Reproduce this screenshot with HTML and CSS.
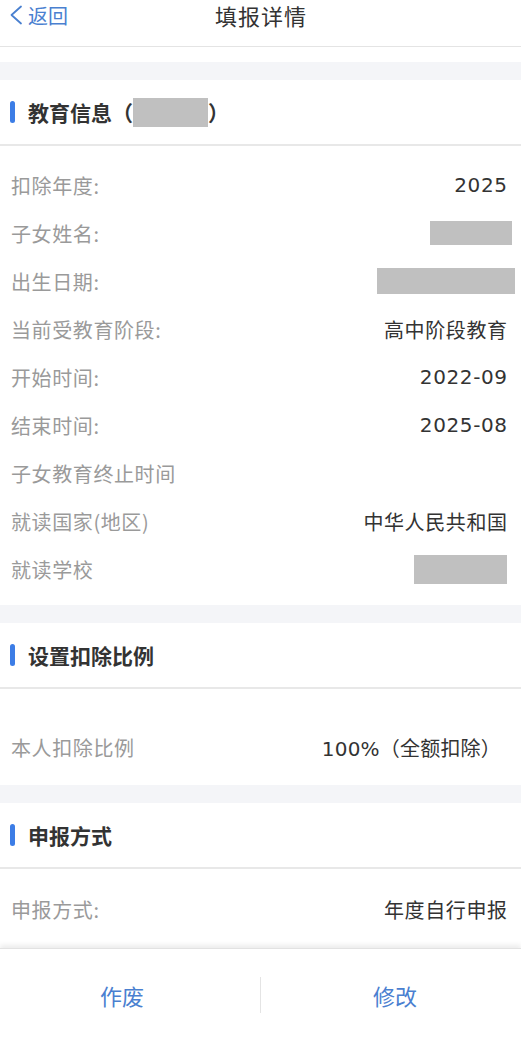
FILE: index.html
```html
<!DOCTYPE html>
<html lang="zh-CN">
<head>
<meta charset="utf-8">
<title>填报详情</title>
<link rel="stylesheet" href="styles.css">
</head>
<body>
<div class="page">
  <header class="topbar">
    <a class="back">
      <svg class="chev" width="16" height="20" viewBox="0 0 16 20"><path d="M13 1.5 L3.5 10 L13 18.5" fill="none" stroke="currentColor" stroke-width="1.8" stroke-linecap="round" stroke-linejoin="round"/></svg>
      <span>返回</span>
    </a>
    <h1 class="title">填报详情</h1>
  </header>
  <div class="spacer"></div>

  <section class="card">
    <div class="card-head"><span class="bar"></span><span class="head-text">教育信息（<span class="mask mask-title"></span>）</span></div>
    <div class="rows rows-edu">
      <div class="row"><span class="label">扣除年度:</span><span class="value">2025</span></div>
      <div class="row"><span class="label">子女姓名:</span><span class="mask mask-name"></span></div>
      <div class="row"><span class="label">出生日期:</span><span class="mask mask-birth"></span></div>
      <div class="row"><span class="label">当前受教育阶段:</span><span class="value">高中阶段教育</span></div>
      <div class="row"><span class="label">开始时间:</span><span class="value">2022-09</span></div>
      <div class="row"><span class="label">结束时间:</span><span class="value">2025-08</span></div>
      <div class="row"><span class="label">子女教育终止时间</span><span class="value"></span></div>
      <div class="row"><span class="label">就读国家(地区)</span><span class="value">中华人民共和国</span></div>
      <div class="row"><span class="label">就读学校</span><span class="mask mask-school"></span></div>
    </div>
  </section>

  <section class="card">
    <div class="card-head"><span class="bar"></span><span class="head-text">设置扣除比例</span></div>
    <div class="rows rows-ratio">
      <div class="row"><span class="label">本人扣除比例</span><span class="value value-ratio">100%（全额扣除）</span></div>
    </div>
  </section>

  <section class="card">
    <div class="card-head"><span class="bar"></span><span class="head-text">申报方式</span></div>
    <div class="rows rows-mode">
      <div class="row"><span class="label">申报方式:</span><span class="value">年度自行申报</span></div>
    </div>
  </section>

  <footer class="actions">
    <button class="btn btn-left">作废</button>
    <span class="divider"></span>
    <button class="btn btn-right">修改</button>
  </footer>
</div>
</body>
</html>
```
FILE: styles.css
```css
* { box-sizing: border-box; }
html, body { margin: 0; padding: 0; background: #fff; }
body {
  font-family: "Noto Sans CJK SC", "Noto Sans", sans-serif;
  color: #333;
}
.page { width: 521px; height: 1040px; overflow: hidden; display: flex; flex-direction: column; }

.topbar {
  height: 47px;
  border-bottom: 1px solid #e4e4e4;
  display: flex;
  justify-content: center;
  align-items: flex-start;
  position: relative;
}
.title {
  margin: 0;
  font-size: 22px;
  font-weight: 400;
  line-height: 30px;
  color: #333;
  letter-spacing: 1px;
  padding-left: 1px;
}
.back {
  position: absolute;
  left: 8px;
  top: 0;
  height: 30px;
  display: flex;
  align-items: center;
  gap: 4px;
  color: #4a80d0;
  font-size: 20px;
}
.chev { display: block; }
.spacer { height: 15px; }

.card { border-top: 18px solid #f4f5f8; }
.card-head {
  height: 66px;
  border-bottom: 2px solid #e8e8e8;
  display: flex;
  align-items: center;
  padding-left: 10px;
  gap: 13px;
}
.bar { width: 5px; height: 22px; border-radius: 3px; background: #3c7de6; }
.head-text {
  font-size: 21px;
  font-weight: 700;
  color: #333;
  display: flex;
  align-items: center;
}
.mask { display: inline-block; background: #c0c0c0; }
.mask-title { width: 75px; height: 29px; }
.mask-name { width: 82px; height: 24px; margin-right: -5px; }
.mask-birth { width: 138px; height: 26px; margin-right: -8px; }
.mask-school { width: 93px; height: 29px; }

.rows { display: flex; flex-direction: column; padding: 0 14px 0 11px; }
.rows-edu { padding-top: 15px; padding-bottom: 12px; }
.rows-ratio { padding-top: 34px; padding-bottom: 14px; }
.rows-mode { padding-top: 16px; padding-bottom: 15px; }
.row {
  height: 48px;
  display: flex;
  justify-content: space-between;
  align-items: center;
  font-size: 20px;
  letter-spacing: 0.6px;
}
.label { color: #9a9a9a; }
.value {
  color: #333;
  font-family: "DejaVu Sans", "Noto Sans CJK SC", sans-serif;
  margin-right: -0.6px;
}
.value-ratio { margin-right: 6px; letter-spacing: 0.2px; }

.actions {
  flex: 1;
  display: flex;
  align-items: center;
  box-shadow: 0 -3px 5px rgba(0,0,0,0.08);
  border-top: 1px solid #e2e2e2;
  position: relative;
}
.btn {
  flex: 1;
  border: 0;
  background: none;
  font-family: inherit;
  font-size: 22px;
  color: #4a80d0;
  padding: 0;
  line-height: 30px;
}
.btn-left { padding: 0 16px 0 0; }
.btn-right { padding: 0 4px 0 12px; }
.divider { width: 1px; height: 36px; background: #e4e4e4; }
```
